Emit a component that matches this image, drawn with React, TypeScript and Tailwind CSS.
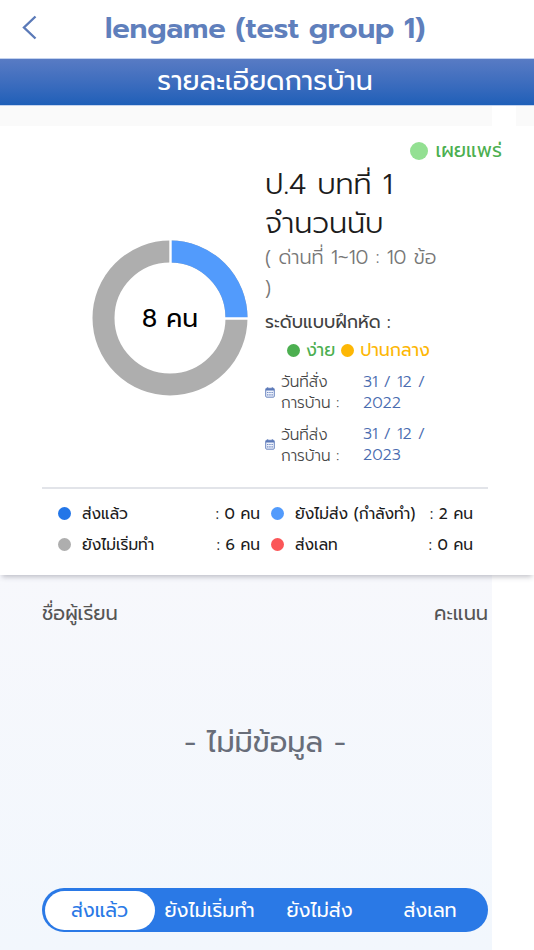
import React from "react";

function Dot({ className }: { className: string }) {
  return <span className={`shrink-0 rounded-full ${className}`} />;
}

function Calendar() {
  return (
    <svg width="10" height="11" viewBox="0 0 10 11" className="shrink-0">
      <path d="M1.7 1.3h6.6a1 1 0 0 1 1 1v6.9a1 1 0 0 1-1 1H1.7a1 1 0 0 1-1-1V2.3a1 1 0 0 1 1-1Z" fill="#eef2fb" stroke="#5a78b8" strokeWidth="0.9" />
      <path d="M.8 1.6h8.4v1.8H.8zM2.2.3h1v2h-1zM6.8.3h1v2h-1z" fill="#5a78b8" />
      <path d="M2.1 4.9h1.3v1.2H2.1zM4.3 4.9h1.3v1.2H4.3zM6.5 4.9h1.3v1.2H6.5zM2.1 7.2h1.3v1.2H2.1zM4.3 7.2h1.3v1.2H4.3zM6.5 7.2h1.3v1.2H6.5z" fill="#6681be" />
    </svg>
  );
}

function Donut() {
  return (
    <div className="relative mt-[113px] h-[158px] w-[158px] shrink-0">
      <svg width="158" height="158" viewBox="0 0 158 158">
        <circle cx="79" cy="79" r="66.5" fill="none" stroke="#aeaeae" strokeWidth="22" />
        <path d="M79 12.5A66.5 66.5 0 0 1 145.5 79" fill="none" stroke="#529bfc" strokeWidth="22" />
        <path d="M79.5 0v25M133 79.5h25" stroke="#fff" strokeWidth="2.4" />
      </svg>
      <div className="absolute inset-0 flex items-center justify-center pt-[3px] text-[25px] text-black">8 คน</div>
    </div>
  );
}

function DateRow({ label, year }: { label: string; year: string }) {
  return (
    <div className="flex h-[52.5px] items-center text-[15.3px] font-light leading-[21px]">
      <Calendar />
      <div className="ml-[6px] w-[82px] whitespace-nowrap text-[#484848]">
        <div>{label}</div>
        <div>การบ้าน :</div>
      </div>
      <div className="whitespace-nowrap pt-px text-[15.8px] text-[#4a6cb0]">
        <div>31 / 12 /</div>
        <div>{year}</div>
      </div>
    </div>
  );
}

function Legend({ color, label, count }: { color: string; label: string; count: string }) {
  return (
    <div className="flex h-[31px] items-center whitespace-nowrap text-[15.4px] text-[#1c1c1c]">
      <Dot className={`h-[13px] w-[13px] ${color}`} />
      <span className="ml-[11px]">{label}</span>
      <span className="ml-auto">: {count} คน</span>
    </div>
  );
}

export default function App() {
  return (
    <div className="flex h-[950px] w-[534px] flex-col overflow-hidden bg-white font-['Prompt','Noto_Sans_Thai',sans-serif]">
      <header className="flex h-[58px] shrink-0 items-center">
        <svg width="16" height="26" viewBox="0 0 16 26" className="-mt-[4px] ml-[21px]" fill="none" stroke="#5b7ab8" strokeWidth="2.4">
          <path d="M14.5 2.5 3 13.5 14.5 24.5" />
        </svg>
        <h1 className="ml-[68px] whitespace-nowrap text-[29px] font-semibold tracking-[-0.2px] text-[#5f7fbc]">lengame (test group 1)</h1>
      </header>
      <div className="flex h-[48px] shrink-0 items-center justify-center border-y border-[#c3d2ee] bg-gradient-to-b from-[#587bc4] to-[#1e5fb8] pr-[4px] text-[27px] text-white">
        <span className="-mt-px whitespace-nowrap">รายละเอียดการบ้าน</span>
      </div>
      <div className="flex h-[20px] shrink-0 bg-[#fafafa]">
        <div className="ml-[492px] w-[24px] bg-white" />
      </div>
      <section className="z-10 h-[449px] shrink-0 bg-white shadow-[0_4px_5px_-2px_rgba(60,60,80,0.3)]">
        <div className="flex h-[361px] pl-[91px]">
          <Donut />
          <div className="ml-[16px] flex w-[237px] flex-col">
            <div className="mt-[12px] flex h-[26px] items-center justify-end whitespace-nowrap text-[19.5px] text-[#4caf50]">
              <Dot className="mr-[7px] h-[18px] w-[18px] bg-[#93e092]" />
              เผยแพร่
            </div>
            <h2 className="mt-px whitespace-nowrap text-[29px] font-light leading-[39px] text-[#1c1c1c]">
              <div>ป.4 บทที่ 1</div>
              <div>จำนวนนับ</div>
            </h2>
            <p className="whitespace-nowrap text-[19.4px] font-light leading-[29.5px] text-[#777]">
              ( ด่านที่ 1~10 : 10 ข้อ<br />)
            </p>
            <p className="mt-[6px] whitespace-nowrap text-[17.6px] leading-[28px] text-[#424242]">ระดับแบบฝึกหัด :</p>
            <div className="ml-[22px] flex h-[28px] items-center whitespace-nowrap text-[17.5px]">
              <Dot className="h-[13px] w-[13px] bg-[#4caf50]" />
              <span className="ml-[6px] text-[#4caf50]">ง่าย</span>
              <Dot className="ml-[6px] h-[13px] w-[13px] bg-[#fdb705]" />
              <span className="ml-[6px] text-[#fdb705]">ปานกลาง</span>
            </div>
            <div className="mt-[2px]">
              <DateRow label="วันที่สั่ง" year="2022" />
              <DateRow label="วันที่ส่ง" year="2023" />
            </div>
          </div>
        </div>
        <div className="ml-[42px] mr-[46px] border-t-2 border-[#e2e4e9] pt-[9px]">
          <div className="flex gap-[11px] pl-[16px] pr-[15px]">
            <div className="w-[202px] shrink-0">
              <Legend color="bg-[#2376e8]" label="ส่งแล้ว" count="0" />
              <Legend color="bg-[#aeaeae]" label="ยังไม่เริ่มทำ" count="6" />
            </div>
            <div className="w-[202px] shrink-0">
              <Legend color="bg-[#529bfc]" label="ยังไม่ส่ง (กำลังทำ)" count="2" />
              <Legend color="bg-[#fb5658]" label="ส่งเลท" count="0" />
            </div>
          </div>
        </div>
      </section>
      <main className="flex w-[492px] flex-1 flex-col bg-gradient-to-b from-[#f7f8fc] to-[#f2f7fd] pl-[42px]">
        <div className="mt-[24px] flex h-[30px] w-[446px] items-center justify-between whitespace-nowrap text-[19.4px] text-[#555]">
          <span>ชื่อผู้เรียน</span>
          <span>คะแนน</span>
        </div>
        <div className="mt-[94px] flex h-[40px] w-[446px] items-center justify-center whitespace-nowrap text-[29px] text-[#686d79]">- ไม่มีข้อมูล -</div>
        <nav className="mt-[125px] flex h-[44px] w-[446px] rounded-full bg-[#2a79e6] p-[2.5px] text-[19.2px] text-white">
          <div className="flex w-[110px] items-center justify-center rounded-full bg-white pt-[2px] text-[#2a79e6]">ส่งแล้ว</div>
          <div className="flex w-[110px] items-center justify-center whitespace-nowrap pt-[2px]">ยังไม่เริ่มทำ</div>
          <div className="flex w-[110px] items-center justify-center whitespace-nowrap pt-[2px]">ยังไม่ส่ง</div>
          <div className="flex w-[111px] items-center justify-center whitespace-nowrap pt-[2px]">ส่งเลท</div>
        </nav>
      </main>
    </div>
  );
}
